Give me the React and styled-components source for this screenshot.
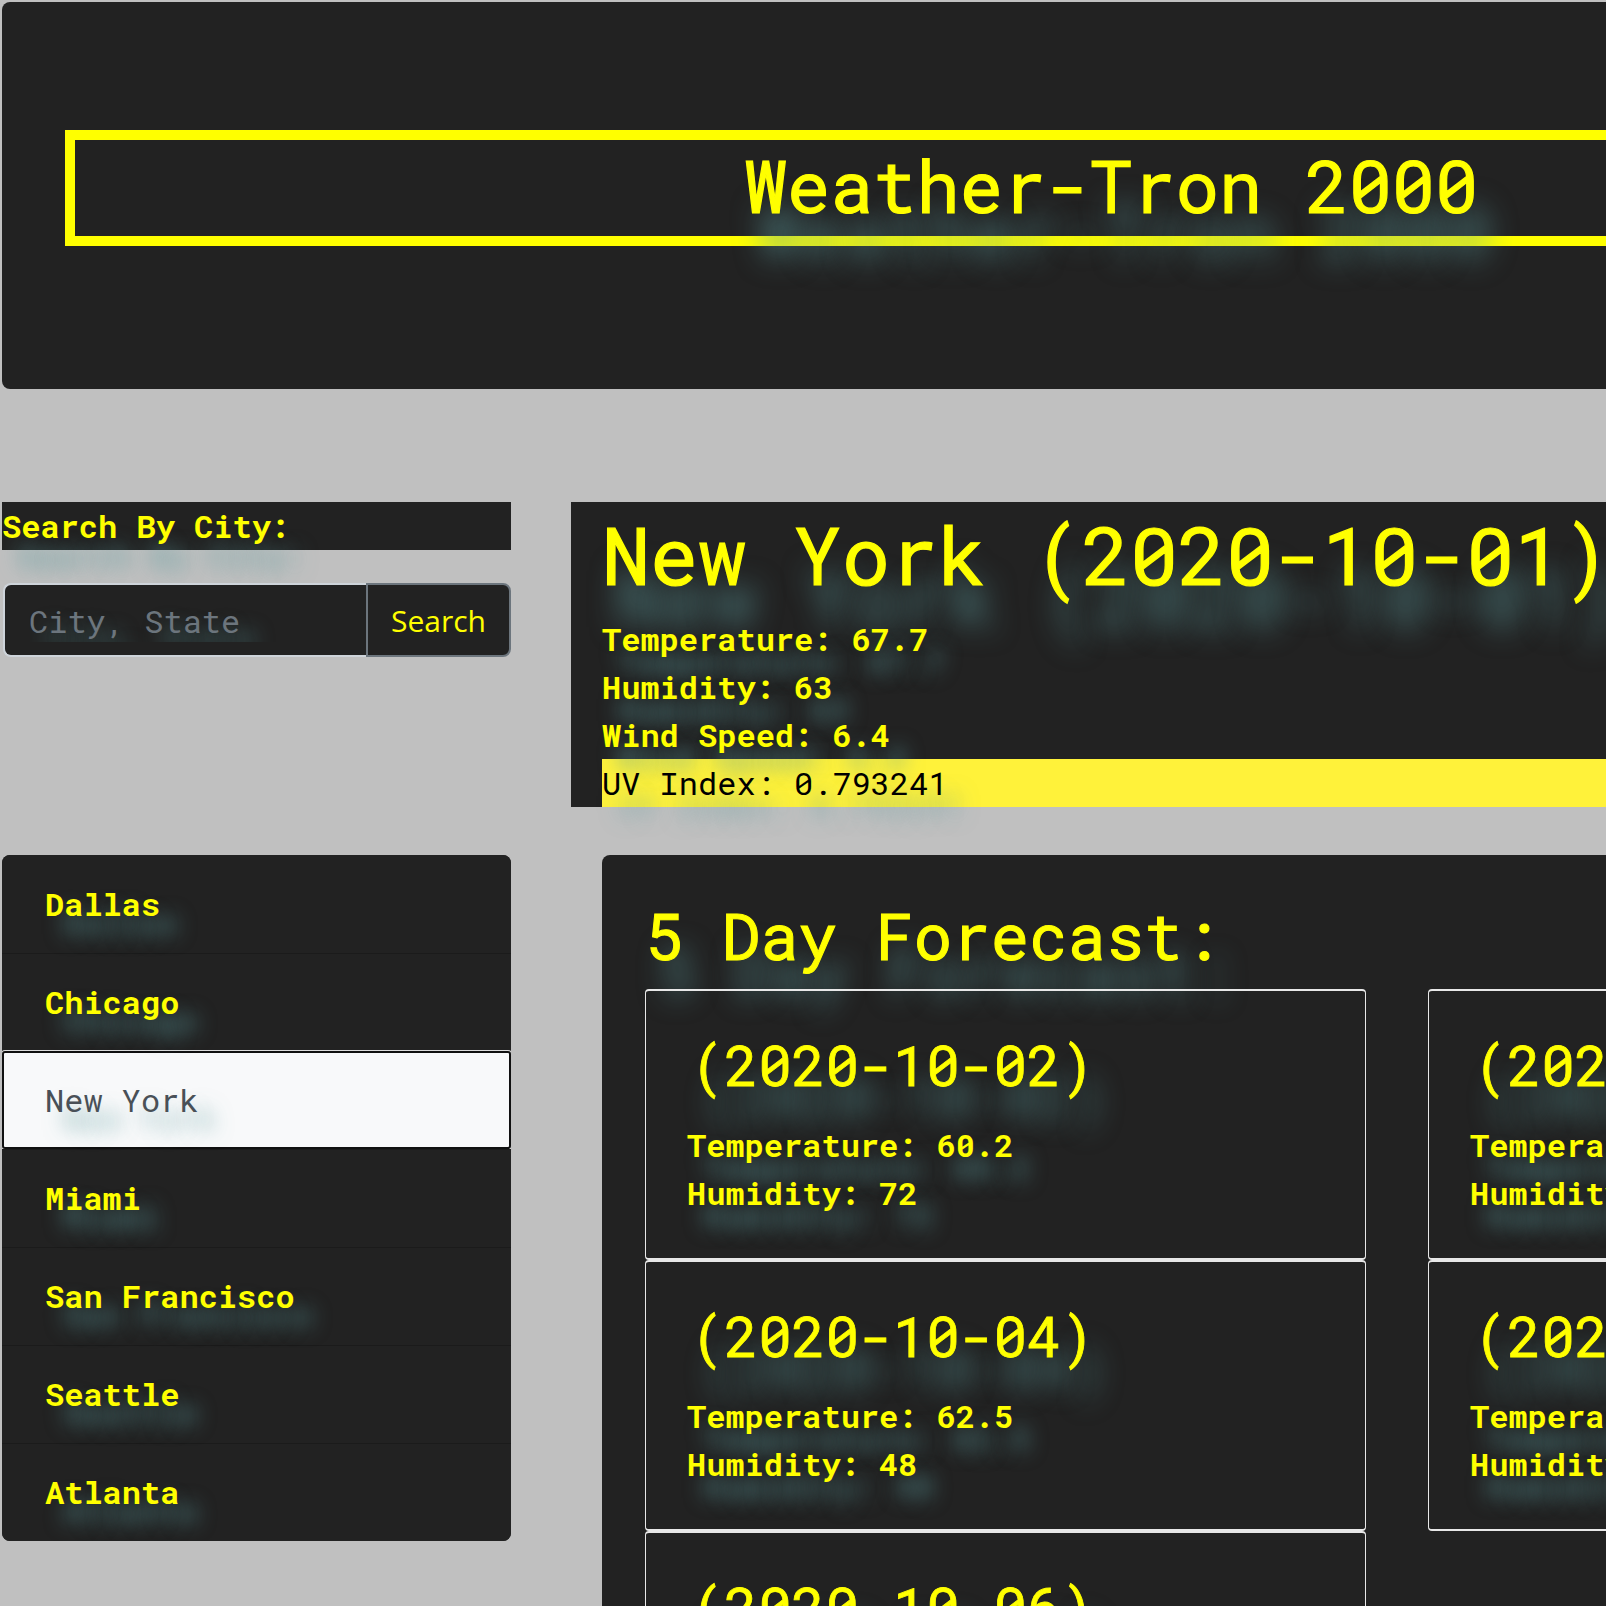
import React from "react";
import styled, { createGlobalStyle } from "styled-components";

const mono = `"Roboto Mono", "DejaVu Sans Mono", monospace`;
const glow = (x, y, b) => `${x}px ${y}px ${b}px rgba(95, 158, 160, 0.75)`;

const GlobalStyle = createGlobalStyle`
  html, body {
    margin: 0;
    padding: 0;
    background: #c0c0c0;
    overflow: hidden;
  }
  body {
    font-family: ${mono};
    color: #ff0;
  }
  * {
    box-sizing: border-box;
  }
`;

const Page = styled.div`
  width: 2220px;
  padding: 2px 0 0 2px;
`;

const Header = styled.header`
  background: #222;
  border-radius: 8px;
  padding: 128px 63px 143px;
`;

const TitleBox = styled.div`
  border: 10px solid #ff0;
  height: 116px;
  display: flex;
  align-items: center;
  justify-content: center;
`;

const Title = styled.h1`
  margin: 0 0 4px;
  font-size: 72px;
  font-weight: 400;
  line-height: 1;
  color: #ff0;
  -webkit-text-stroke: 1.2px #ff0;
  text-shadow: ${glow(14, 46, 28)};
`;

const Main = styled.main`
  display: grid;
  grid-template-columns: 509px 1fr;
  column-gap: 60px;
  row-gap: 48px;
  margin-top: 113px;
`;

const SearchPanel = styled.section`
  display: flex;
  flex-direction: column;
`;

const SearchHeading = styled.h3`
  margin: 0;
  background: #222;
  color: #ff0;
  font-size: 32px;
  font-weight: 700;
  line-height: 48px;
  text-shadow: ${glow(14, 30, 20)};
`;

const InputGroup = styled.div`
  display: flex;
  height: 74px;
  margin: 33px 0 0 1px;
`;

const CityInput = styled.input`
  flex: 1;
  min-width: 0;
  background: #222;
  border: 2px solid #ced4da;
  border-right: 0;
  border-radius: 8px 0 0 8px;
  padding: 0 24px;
  font-family: ${mono};
  font-size: 32px;
  color: #ff0;
  outline: none;

  &::placeholder {
    color: #6c757d;
    text-shadow: ${glow(16, 16, 20)};
  }
`;

const SearchButton = styled.button`
  width: 145px;
  background: #222;
  border: 2px solid #6c757d;
  border-radius: 0 8px 8px 0;
  color: #ff0;
  font-family: "Open Sans", "Noto Sans", sans-serif;
  font-size: 30px;
  padding: 0;
  cursor: pointer;
`;

const CityList = styled.ul`
  list-style: none;
  margin: 0;
  padding: 0;
  background: #222;
  border-radius: 8px;
  overflow: hidden;
  align-self: start;
`;

const CityItem = styled.li`
  padding: ${(p) => (p.$active ? "23px 41px 23px" : "24px 43px 25px")};
  font-size: 32px;
  line-height: 48px;
  font-weight: ${(p) => (p.$active ? 400 : 700)};
  color: ${(p) => (p.$active ? "#495057" : "#ff0")};
  background: ${(p) => (p.$active ? "#f8f9fa" : "#222")};
  border-top: 1px solid #1b1b1b;
  ${(p) => p.$active && "border: 2px solid #111; border-radius: 3px; box-shadow: 0 0 0 1px #ddd;"}
  text-shadow: ${glow(18, 18, 20)};

  &:first-child {
    border-top: 0;
    padding-top: 25px;
  }
`;

const Current = styled.section`
  background: #222;
  padding: 4px 0 0 31px;
`;

const CityTitle = styled.h1`
  margin: 0 0 13px;
  font-size: 80px;
  font-weight: 400;
  line-height: 96px;
  white-space: nowrap;
  color: #ff0;
  -webkit-text-stroke: 1.2px #ff0;
  text-shadow: ${glow(12, 42, 28)};
`;

const Stat = styled.p`
  margin: 0;
  font-size: 32px;
  line-height: 48px;
  font-weight: ${(p) => (p.$highlight ? 400 : 700)};
  color: ${(p) => (p.$highlight ? "#000" : "#ff0")};
  background: ${(p) => (p.$highlight ? "#fff23a" : "transparent")};
  text-shadow: ${glow(16, 22, 20)};
`;

const Forecast = styled.section`
  margin-left: 31px;
  background: #222;
  border-radius: 8px;
  padding: 42px 43px 40px;
`;

const ForecastHeading = styled.h2`
  margin: 0 0 15px;
  font-size: 64px;
  font-weight: 400;
  line-height: 77px;
  color: #ff0;
  -webkit-text-stroke: 1px #ff0;
  text-shadow: ${glow(12, 36, 26)};
`;

const CardGrid = styled.div`
  display: grid;
  grid-template-columns: 721px 721px;
  column-gap: 62px;
`;

const Card = styled.div`
  border: 1px solid #e8e8e8;
  border-top-width: 2px;
  border-bottom-width: 2px;
  border-radius: 4px;
  padding: 40px 41px 38px;
  height: 271px;
`;

const CardDate = styled.h3`
  margin: 0 0 23px 4px;
  font-size: 56px;
  font-weight: 400;
  line-height: 67px;
  color: #ff0;
  -webkit-text-stroke: 0.8px #ff0;
  text-shadow: ${glow(12, 32, 26)};
`;

const cities = ["Dallas", "Chicago", "New York", "Miami", "San Francisco", "Seattle", "Atlanta"];

const days = [
  { date: "2020-10-02", temp: "60.2", humidity: 72 },
  { date: "2020-10-03", temp: "58.4", humidity: 55 },
  { date: "2020-10-04", temp: "62.5", humidity: 48 },
  { date: "2020-10-05", temp: "64.1", humidity: 60 },
  { date: "2020-10-06", temp: "59.8", humidity: 66 },
];

const App = () => {
  return (
    <Page>
      <GlobalStyle />
      <Header>
        <TitleBox>
          <Title>Weather-Tron 2000</Title>
        </TitleBox>
      </Header>

      <Main>
        <SearchPanel>
          <SearchHeading>Search By City:</SearchHeading>
          <InputGroup>
            <CityInput placeholder="City, State" />
            <SearchButton>Search</SearchButton>
          </InputGroup>
        </SearchPanel>

        <Current>
          <CityTitle>New York (2020-10-01)</CityTitle>
          <Stat>Temperature: 67.7</Stat>
          <Stat>Humidity: 63</Stat>
          <Stat>Wind Speed: 6.4</Stat>
          <Stat $highlight>UV Index: 0.793241</Stat>
        </Current>

        <CityList>
          {cities.map((city) => (
            <CityItem key={city} $active={city === "New York"}>
              {city}
            </CityItem>
          ))}
        </CityList>

        <Forecast>
          <ForecastHeading>5 Day Forecast:</ForecastHeading>
          <CardGrid>
            {days.map((day) => (
              <Card key={day.date}>
                <CardDate>({day.date})</CardDate>
                <Stat>Temperature: {day.temp}</Stat>
                <Stat>Humidity: {day.humidity}</Stat>
              </Card>
            ))}
          </CardGrid>
        </Forecast>
      </Main>
    </Page>
  );
};

export default App;
